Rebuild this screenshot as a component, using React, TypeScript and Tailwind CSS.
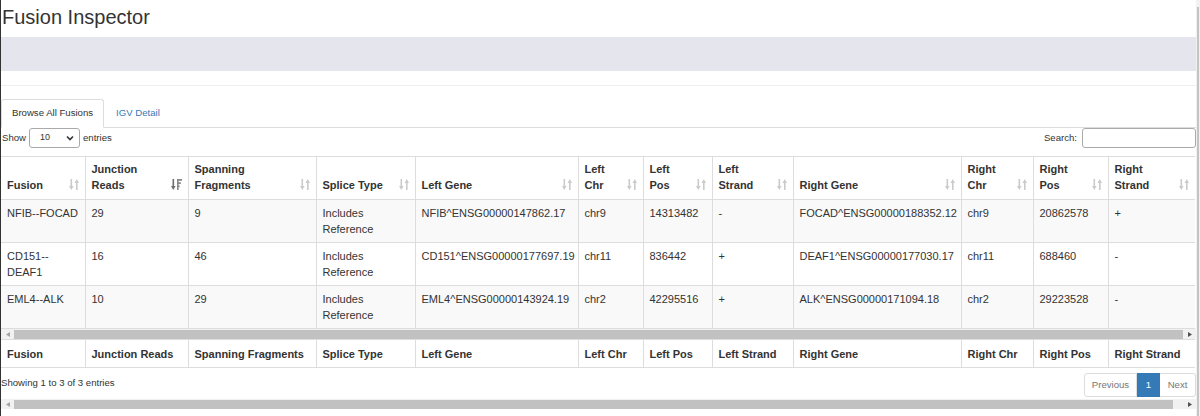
const columns = [
  { label: "Fusion", w: 84 },
  { label: "Junction Reads", w: 103, sorted: true },
  { label: "Spanning Fragments", w: 128 },
  { label: "Splice Type", w: 99 },
  { label: "Left Gene", w: 163 },
  { label: "Left Chr", w: 65 },
  { label: "Left Pos", w: 69 },
  { label: "Left Strand", w: 81 },
  { label: "Right Gene", w: 168 },
  { label: "Right Chr", w: 72 },
  { label: "Right Pos", w: 75 },
  { label: "Right Strand", w: 87 },
];

const rows = [
  ["NFIB--FOCAD", "29", "9", "Includes Reference", "NFIB^ENSG00000147862.17", "chr9", "14313482", "-", "FOCAD^ENSG00000188352.12", "chr9", "20862578", "+"],
  ["CD151--DEAF1", "16", "46", "Includes Reference", "CD151^ENSG00000177697.19", "chr11", "836442", "+", "DEAF1^ENSG00000177030.17", "chr11", "688460", "-"],
  ["EML4--ALK", "10", "29", "Includes Reference", "EML4^ENSG00000143924.19", "chr2", "42295516", "+", "ALK^ENSG00000171094.18", "chr2", "29223528", "-"],
];

function SortIcon({ active }: { active?: boolean }) {
  if (active) {
    return (
      <svg width="11" height="11" viewBox="0 0 11 11" className="mb-[3px] shrink-0">
        <rect x="1.5" y="0" width="1.6" height="8" fill="#6f6f6f" />
        <polygon points="0,7 4.6,7 2.3,11" fill="#6f6f6f" />
        <rect x="6" y="0" width="5" height="1.8" fill="#8a8a8a" />
        <rect x="6" y="3.2" width="3.8" height="1.8" fill="#8a8a8a" />
        <rect x="6" y="6.4" width="2.6" height="1.8" fill="#8a8a8a" />
        <rect x="6" y="0" width="1.6" height="11" fill="#8a8a8a" />
      </svg>
    );
  }
  return (
    <svg width="10" height="11" viewBox="0 0 10 11" className="mb-[3px] shrink-0">
      <rect x="1.5" y="0" width="1.6" height="8" fill="#cbcbcb" />
      <polygon points="0,7 4.6,7 2.3,11" fill="#cbcbcb" />
      <rect x="7" y="3" width="1.6" height="8" fill="#cbcbcb" />
      <polygon points="5.5,4 10,4 7.8,0" fill="#cbcbcb" />
    </svg>
  );
}

function HScroll({ tail }: { tail: number }) {
  return (
    <div className="flex h-[10px] items-center bg-[#f1f1f1]">
      <div className="flex w-[13px] justify-center">
        <svg width="4" height="5" viewBox="0 0 4 5">
          <polygon points="4,0 4,5 0,2.5" fill="#a3a3a3" />
        </svg>
      </div>
      <div className="h-[9px] flex-1 bg-[#c1c1c1]" />
      <div className="flex justify-end pr-[4px]" style={{ width: tail }}>
        <svg width="4" height="5" viewBox="0 0 4 5">
          <polygon points="0,0 0,5 4,2.5" fill="#505050" />
        </svg>
      </div>
    </div>
  );
}

function ColGroup() {
  return (
    <colgroup>
      {columns.map((c) => (
        <col key={c.label} style={{ width: c.w }} />
      ))}
    </colgroup>
  );
}

export default function App() {
  return (
    <div className="flex h-[416px] w-[1200px] overflow-hidden bg-white font-['Liberation_Sans',Arial,sans-serif] text-[#333]">
      <div className="w-px shrink-0 bg-[#333]" />

      <main className="w-[1195px] shrink-0">
        <h1 className="h-[37px] pl-px pt-[6px] text-[20px] leading-[22px]">Fusion Inspector</h1>
        <div className="h-[34px] bg-[#e4e5ed]" />
        <div className="h-[14px]" />
        <div className="h-px bg-[#eee]" />
        <div className="h-[13px]" />

        {/* tabs */}
        <div className="flex h-[29px] border-b border-[#ddd] text-[9.6px]">
          <div className="-mb-px flex h-[29px] items-center rounded-t-[3px] border border-[#ddd] border-b-white bg-white px-[10px]">
            Browse All Fusions
          </div>
          <div className="flex items-center px-[12px] text-[#337ab7]">IGV Detail</div>
        </div>

        {/* controls */}
        <div className="flex h-[20px] items-center justify-between text-[9.6px]">
          <div className="flex items-center gap-[3px] pl-px">
            <span>Show</span>
            <div className="flex h-[20px] w-[51px] items-center justify-between rounded-[3px] border border-[#aaa] pl-[10px] pr-[5px] text-[9px]">
              <span>10</span>
              <svg width="8" height="6" viewBox="0 0 8 6">
                <path d="M1 1.5 L4 4.5 L7 1.5" fill="none" stroke="#333" strokeWidth="1.6" />
              </svg>
            </div>
            <span>entries</span>
          </div>
          <div className="flex items-center gap-[5px]">
            <span>Search:</span>
            <div className="h-[20px] w-[114px] rounded-[3px] border border-[#aaa]" />
          </div>
        </div>
        <div className="h-[8px]" />

        {/* main table */}
        <table className="w-[1194px] table-fixed border-collapse text-[11px] leading-[16px]">
          <ColGroup />
          <thead>
            <tr className="h-[41px] border-y border-[#ddd]">
              {columns.map((c) => (
                <th key={c.label} className="border-l border-[#ddd] px-[6px] pb-[6px] pt-[4px] text-left align-bottom font-bold first:border-l-0">
                  <div className="flex items-end justify-between">
                    <span className="pr-[8px]">{c.label}</span>
                    <SortIcon active={c.sorted} />
                  </div>
                </th>
              ))}
            </tr>
          </thead>
          <tbody>
            {rows.map((r, i) => (
              <tr key={i} className={"h-[43px] border-b border-[#ddd] " + (i % 2 === 0 ? "bg-[#f9f9f9]" : "bg-white")}>
                {r.map((v, j) => (
                  <td key={j} className="border-l border-[#ddd] pl-[6px] pr-[4px] pt-[5px] align-top first:border-l-0">
                    {v}
                  </td>
                ))}
              </tr>
            ))}
          </tbody>
        </table>

        <HScroll tail={13} />

        {/* footer header */}
        <table className="w-[1194px] table-fixed border-collapse text-[11px] leading-[16px]">
          <ColGroup />
          <tfoot>
            <tr className="h-[28px] border-y border-[#ddd]">
              {columns.map((c) => (
                <th key={c.label} className="border-l border-[#ddd] px-[6px] text-left align-middle font-bold whitespace-nowrap first:border-l-0">
                  {c.label}
                </th>
              ))}
            </tr>
          </tfoot>
        </table>

        <div className="flex h-[31px] items-start justify-between text-[9.6px]">
          <div className="pt-[8px]">Showing 1 to 3 of 3 entries</div>
          <div className="mt-[5px] flex h-[24px] items-stretch">
            <div className="flex w-[53px] items-center justify-center rounded-l-[3px] border border-[#ddd] text-[#777]">Previous</div>
            <div className="flex w-[23px] items-center justify-center border border-[#337ab7] bg-[#337ab7] text-white">1</div>
            <div className="flex w-[36px] items-center justify-center rounded-r-[3px] border border-l-0 border-[#ddd] text-[#777]">Next</div>
          </div>
        </div>

        <HScroll tail={23} />
      </main>

      <div className="w-[4px] shrink-0 bg-[#f1f1f1] pt-[7px]">
        <div className="ml-px h-full w-[2px] bg-[#c4c4c4]" />
      </div>
    </div>
  );
}
